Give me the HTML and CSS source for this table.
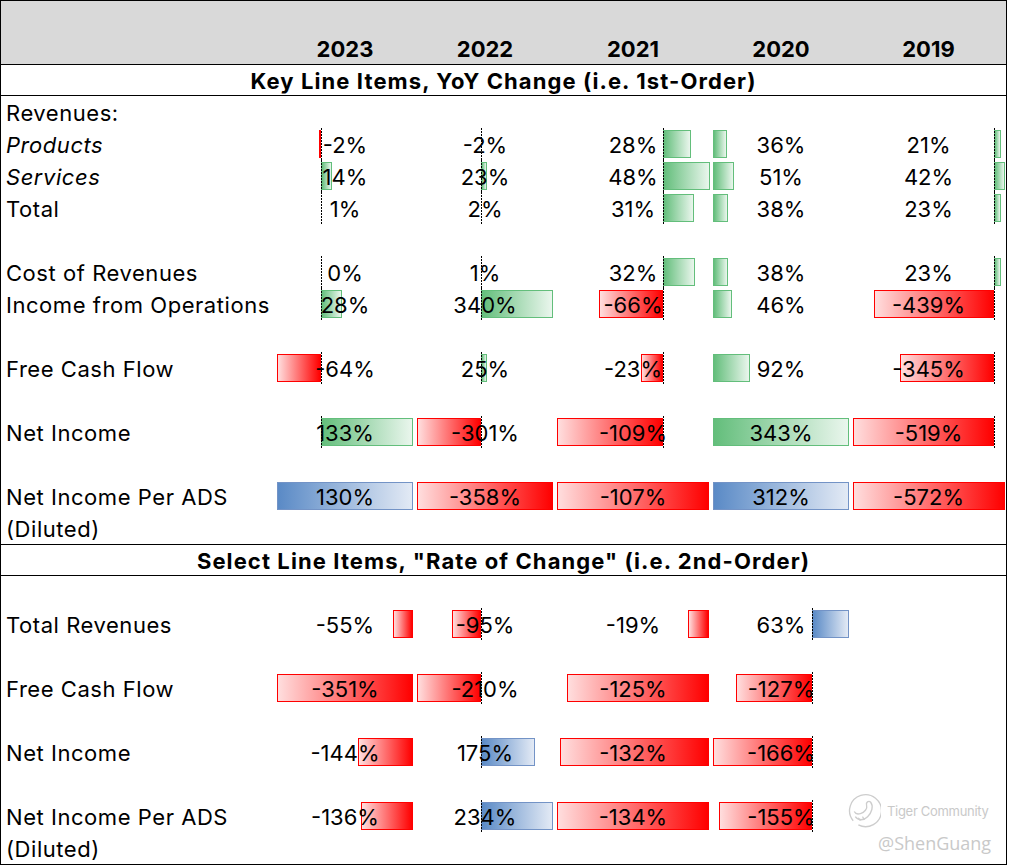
FILE: index.html
```html
<!DOCTYPE html>
<html>
<head>
<meta charset="utf-8">
<link rel="stylesheet" href="styles.css">
</head>
<body>
<div class="sheet">
  <div class="row hdr">
    <div></div><div class="yr">2023</div><div class="yr">2022</div><div class="yr">2021</div><div class="yr">2020</div><div class="yr">2019</div>
  </div>
  <div class="title">Key Line Items, YoY Change (i.e. 1st-Order)</div>
  <div class="sec">
    <div class="row"><div class="lbl">Revenues:</div><div></div><div></div><div></div><div></div><div></div></div>
    <div class="row"><div class="lbl it">Products</div>
      <div class="c"><span class="bar red" style="left:44px;width:2px"></span><span class="axis" style="left:46px"></span><span class="v">-2%</span></div>
      <div class="c"><span class="axis" style="left:66px"></span><span class="v">-2%</span></div>
      <div class="c"><span class="bar grn" style="left:108px;width:28px"></span><span class="axis" style="left:108px"></span><span class="v">28%</span></div>
      <div class="c"><span class="bar grn" style="left:2px;width:14px"></span><span class="v">36%</span></div>
      <div class="c"><span class="bar grn" style="left:143px;width:7px"></span><span class="axis" style="left:143px"></span><span class="v">21%</span></div>
    </div>
    <div class="row"><div class="lbl it">Services</div>
      <div class="c"><span class="bar grn" style="left:46px;width:11px"></span><span class="axis" style="left:46px"></span><span class="v">14%</span></div>
      <div class="c"><span class="bar grn" style="left:66px;width:6px"></span><span class="axis" style="left:66px"></span><span class="v">23%</span></div>
      <div class="c"><span class="bar grn" style="left:108px;width:47px"></span><span class="axis" style="left:108px"></span><span class="v">48%</span></div>
      <div class="c"><span class="bar grn" style="left:2px;width:21px"></span><span class="v">51%</span></div>
      <div class="c"><span class="bar grn" style="left:143px;width:11px"></span><span class="axis" style="left:143px"></span><span class="v">42%</span></div>
    </div>
    <div class="row"><div class="lbl">Total</div>
      <div class="c"><span class="axis" style="left:46px"></span><span class="v">1%</span></div>
      <div class="c"><span class="axis" style="left:66px"></span><span class="v">2%</span></div>
      <div class="c"><span class="bar grn" style="left:108px;width:31px"></span><span class="axis" style="left:108px"></span><span class="v">31%</span></div>
      <div class="c"><span class="bar grn" style="left:2px;width:15px"></span><span class="v">38%</span></div>
      <div class="c"><span class="bar grn" style="left:143px;width:7px"></span><span class="axis" style="left:143px"></span><span class="v">23%</span></div>
    </div>
    <div class="row"><div class="lbl"></div><div></div><div></div><div></div><div></div><div></div></div>
    <div class="row"><div class="lbl">Cost of Revenues</div>
      <div class="c"><span class="axis" style="left:46px"></span><span class="v">0%</span></div>
      <div class="c"><span class="axis" style="left:66px"></span><span class="v">1%</span></div>
      <div class="c"><span class="bar grn" style="left:108px;width:32px"></span><span class="axis" style="left:108px"></span><span class="v">32%</span></div>
      <div class="c"><span class="bar grn" style="left:2px;width:15px"></span><span class="v">38%</span></div>
      <div class="c"><span class="bar grn" style="left:143px;width:7px"></span><span class="axis" style="left:143px"></span><span class="v">23%</span></div>
    </div>
    <div class="row"><div class="lbl">Income from Operations</div>
      <div class="c"><span class="bar grn" style="left:46px;width:21px"></span><span class="axis" style="left:46px"></span><span class="v">28%</span></div>
      <div class="c"><span class="bar grn" style="left:66px;width:72px"></span><span class="axis" style="left:66px"></span><span class="v">340%</span></div>
      <div class="c"><span class="bar red" style="left:44px;width:64px"></span><span class="axis" style="left:108px"></span><span class="v">-66%</span></div>
      <div class="c"><span class="bar grn" style="left:2px;width:19px"></span><span class="v">46%</span></div>
      <div class="c"><span class="bar red" style="left:23px;width:120px"></span><span class="axis" style="left:143px"></span><span class="v">-439%</span></div>
    </div>
    <div class="row"><div class="lbl"></div><div></div><div></div><div></div><div></div><div></div></div>
    <div class="row"><div class="lbl">Free Cash Flow</div>
      <div class="c"><span class="bar red" style="left:2px;width:44px"></span><span class="axis" style="left:46px"></span><span class="v">-64%</span></div>
      <div class="c"><span class="bar grn" style="left:66px;width:6px"></span><span class="axis" style="left:66px"></span><span class="v">25%</span></div>
      <div class="c"><span class="bar red" style="left:86px;width:22px"></span><span class="axis" style="left:108px"></span><span class="v">-23%</span></div>
      <div class="c"><span class="bar grn" style="left:2px;width:37px"></span><span class="v">92%</span></div>
      <div class="c"><span class="bar red" style="left:49px;width:94px"></span><span class="axis" style="left:143px"></span><span class="v">-345%</span></div>
    </div>
    <div class="row"><div class="lbl"></div><div></div><div></div><div></div><div></div><div></div></div>
    <div class="row"><div class="lbl">Net Income</div>
      <div class="c"><span class="bar grn" style="left:46px;width:92px"></span><span class="axis" style="left:46px"></span><span class="v">133%</span></div>
      <div class="c"><span class="bar red" style="left:2px;width:64px"></span><span class="axis" style="left:66px"></span><span class="v">-301%</span></div>
      <div class="c"><span class="bar red" style="left:2px;width:106px"></span><span class="axis" style="left:108px"></span><span class="v">-109%</span></div>
      <div class="c"><span class="bar grn" style="left:2px;width:136px"></span><span class="v">343%</span></div>
      <div class="c"><span class="bar red" style="left:2px;width:141px"></span><span class="axis" style="left:143px"></span><span class="v">-519%</span></div>
    </div>
    <div class="row"><div class="lbl"></div><div></div><div></div><div></div><div></div><div></div></div>
    <div class="row"><div class="lbl">Net Income Per ADS</div>
      <div class="c"><span class="bar blu" style="left:2px;width:136px"></span><span class="v">130%</span></div>
      <div class="c"><span class="bar red" style="left:2px;width:136px"></span><span class="v">-358%</span></div>
      <div class="c"><span class="bar red" style="left:2px;width:152px"></span><span class="v">-107%</span></div>
      <div class="c"><span class="bar blu" style="left:2px;width:136px"></span><span class="v">312%</span></div>
      <div class="c"><span class="bar red" style="left:2px;width:152px"></span><span class="v">-572%</span></div>
    </div>
    <div class="row"><div class="lbl">(Diluted)</div><div></div><div></div><div></div><div></div><div></div></div>
  </div>
  <div class="title">Select Line Items, "Rate of Change" (i.e. 2nd-Order)</div>
  <div class="sec">
    <div class="row"><div class="lbl"></div><div></div><div></div><div></div><div></div><div></div></div>
    <div class="row"><div class="lbl">Total Revenues</div>
      <div class="c"><span class="bar red" style="left:118px;width:20px"></span><span class="v">-55%</span></div>
      <div class="c"><span class="bar red" style="left:37px;width:29px"></span><span class="axis" style="left:66px"></span><span class="v">-95%</span></div>
      <div class="c"><span class="bar red" style="left:133px;width:21px"></span><span class="v">-19%</span></div>
      <div class="c"><span class="bar blu" style="left:101px;width:37px"></span><span class="axis" style="left:101px"></span><span class="v">63%</span></div>
      <div class="c"></div>
    </div>
    <div class="row"><div class="lbl"></div><div></div><div></div><div></div><div></div><div></div></div>
    <div class="row"><div class="lbl">Free Cash Flow</div>
      <div class="c"><span class="bar red" style="left:2px;width:136px"></span><span class="v">-351%</span></div>
      <div class="c"><span class="bar red" style="left:2px;width:64px"></span><span class="axis" style="left:66px"></span><span class="v">-210%</span></div>
      <div class="c"><span class="bar red" style="left:12px;width:142px"></span><span class="v">-125%</span></div>
      <div class="c"><span class="bar red" style="left:25px;width:76px"></span><span class="axis" style="left:101px"></span><span class="v">-127%</span></div>
      <div class="c"></div>
    </div>
    <div class="row"><div class="lbl"></div><div></div><div></div><div></div><div></div><div></div></div>
    <div class="row"><div class="lbl">Net Income</div>
      <div class="c"><span class="bar red" style="left:83px;width:55px"></span><span class="v">-144%</span></div>
      <div class="c"><span class="bar blu" style="left:66px;width:54px"></span><span class="axis" style="left:66px"></span><span class="v">175%</span></div>
      <div class="c"><span class="bar red" style="left:5px;width:149px"></span><span class="v">-132%</span></div>
      <div class="c"><span class="bar red" style="left:2px;width:99px"></span><span class="axis" style="left:101px"></span><span class="v">-166%</span></div>
      <div class="c"></div>
    </div>
    <div class="row"><div class="lbl"></div><div></div><div></div><div></div><div></div><div></div></div>
    <div class="row"><div class="lbl">Net Income Per ADS</div>
      <div class="c"><span class="bar red" style="left:86px;width:52px"></span><span class="v">-136%</span></div>
      <div class="c"><span class="bar blu" style="left:66px;width:72px"></span><span class="axis" style="left:66px"></span><span class="v">234%</span></div>
      <div class="c"><span class="bar red" style="left:2px;width:152px"></span><span class="v">-134%</span></div>
      <div class="c"><span class="bar red" style="left:8px;width:93px"></span><span class="axis" style="left:101px"></span><span class="v">-155%</span></div>
      <div class="c"></div>
    </div>
    <div class="row"><div class="lbl">(Diluted)</div><div></div><div></div><div></div><div></div><div></div></div>
  </div>
  <div class="wm">
    <div class="wm-top">
      <svg class="wm-logo" width="35" height="35" viewBox="0 0 34 34">
        <path d="M7 27 A15.5 15.5 0 1 1 12 31" fill="none" stroke="#cdcdcd" stroke-width="1.3"/>
        <path d="M9 23 C12 27 17 27 21 23 C25 19 27 13 24 9 C22 7 19 9 20 12 C21 15 18 19 14 20 C11 21 9 20 8 18" fill="none" stroke="#cdcdcd" stroke-width="1.3"/>
        <path d="M12 24 L14 27 M16 23 L18 26" stroke="#cdcdcd" stroke-width="1.1"/>
      </svg>
      <span class="wm-brand">Tiger Community</span>
    </div>
    <div class="wm-user">@ShenGuang</div>
  </div>
</div>
</body>
</html>
```
FILE: styles.css
```css
html, body {
  margin: 0;
  padding: 0;
  background: #ffffff;
}
.sheet {
  position: relative;
  width: 1007px;
  box-sizing: border-box;
  border: 1px solid #000;
  border-bottom: none;
  font-family: "Inter", "Liberation Sans", sans-serif;
  font-size: 22px;
  color: #000;
}
.row {
  display: grid;
  grid-template-columns: 274px 140px 140px 156px 140px 155px;
  grid-auto-rows: 32px;
  height: 32px;
  line-height: 34px;
}
.hdr {
  height: 63px;
  grid-auto-rows: 63px;
  background: #d9d9d9;
  border-bottom: 1px solid #000;
  align-items: end;
}
.yr {
  font-weight: 700;
  text-align: center;
  line-height: 30px;
}
.title {
  height: 30px;
  line-height: 32px;
  text-align: center;
  font-weight: 700;
  letter-spacing: 1.1px;
  border-bottom: 1px solid #000;
}
.sec {
  border-bottom: 1px solid #000;
}
.lbl {
  padding-left: 5px;
  white-space: nowrap;
  letter-spacing: 0.55px;
}
.it {
  font-style: italic;
}
.c {
  position: relative;
  text-align: center;
}
.v {
  position: relative;
  z-index: 2;
}
.bar {
  position: absolute;
  top: 2px;
  height: 28px;
  box-sizing: border-box;
  border: 1px solid;
  z-index: 0;
}
.grn {
  border-color: #63be7b;
  background: linear-gradient(to right, #63be7b, #eaf6ed);
}
.red {
  border-color: #ff0000;
  background: linear-gradient(to right, #ffdede, #ff0000);
}
.blu {
  border-color: #7393c6;
  background: linear-gradient(to right, #5a8ac6, #e3eaf5);
}
.axis {
  position: absolute;
  top: 0;
  height: 32px;
  width: 1px;
  z-index: 1;
  background: repeating-linear-gradient(to bottom, #000 0, #000 2px, transparent 2px, transparent 3px);
}
.wm {
  position: absolute;
  left: 845px;
  top: 792px;
  color: #c9c9c9;
}
.wm-top {
  display: flex;
  align-items: center;
  gap: 6px;
}
.wm-brand {
  font-size: 13px;
  line-height: 14px;
  letter-spacing: -0.3px;
}
.wm-user {
  font-family: "Open Sans", sans-serif;
  font-size: 18px;
  line-height: 24px;
  margin-top: 3px;
  margin-left: 32px;
}
```
